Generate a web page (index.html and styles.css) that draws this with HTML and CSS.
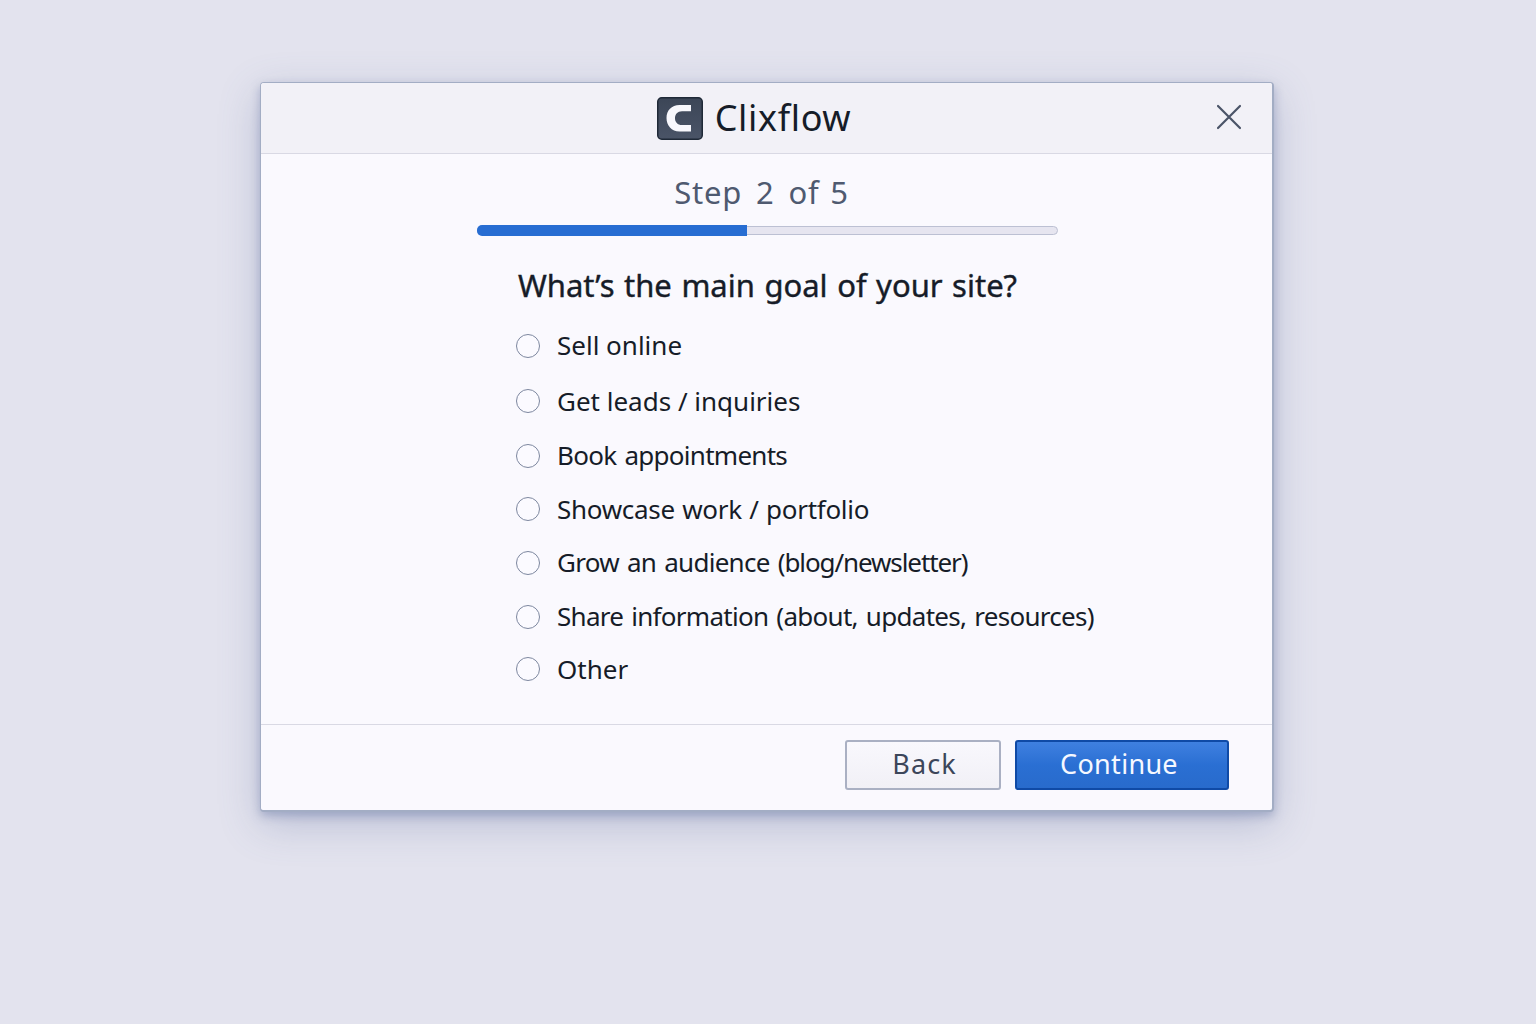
FILE: index.html
```
<!DOCTYPE html>
<html lang="en">
<head>
    <meta charset="UTF-8">
    <meta name="viewport" content="width=device-width, initial-scale=1.0">
    <title>Clixflow</title>
    <link rel="stylesheet" href="styles.css">
</head>
<body>
    <div class="modal">
        <header class="modal-header">
            <div class="brand">
                <svg class="logo" viewBox="0 0 46 43" width="46" height="43">
                    <defs>
                        <linearGradient id="logoBg" x1="0" y1="0" x2="0" y2="1">
                            <stop offset="0" stop-color="#3c4657"/>
                            <stop offset="1" stop-color="#4a5467"/>
                        </linearGradient>
                    </defs>
                    <rect x="0.75" y="0.75" width="44.5" height="41.5" rx="4" fill="url(#logoBg)" stroke="#1f2937" stroke-width="1.5"/>
                    <path d="M34 8H22.500C14.500 8 9.500 13.500 9.500 21S14.500 34.500 22.500 34.500H34V28H25C20.500 28 18 25 18 21.200S20.500 14.200 25 14.200H34Z" fill="#f7f7fc"/>
                </svg>
                <span class="brand-name">Clixflow</span>
            </div>
            <button class="close" aria-label="Close">
                <svg viewBox="0 0 26 26" width="26" height="26">
                    <path d="M2 2L24 24M24 2L2 24" fill="none" stroke="#4b5468" stroke-width="2.2" stroke-linecap="round"/>
                </svg>
            </button>
        </header>

        <main class="modal-body">
            <p class="step">Step <span class="step-num">2</span> of 5</p>
            <div class="progress"><div class="progress-fill"></div></div>

            <h1 class="question">What’s the main goal of your site?</h1>
            <div class="options">
                <label class="option"><input type="radio" name="goal"><span>Sell online</span></label>
                <label class="option"><input type="radio" name="goal"><span>Get leads / inquiries</span></label>
                <label class="option"><input type="radio" name="goal"><span class="tight">Book appointments</span></label>
                <label class="option"><input type="radio" name="goal"><span class="snug">Showcase work / portfolio</span></label>
                <label class="option"><input type="radio" name="goal"><span class="tight">Grow an audience <span class="tighter">(blog/newsletter)</span></span></label>
                <label class="option"><input type="radio" name="goal"><span class="tight">Share information (about, updates, resources)</span></label>
                <label class="option"><input type="radio" name="goal"><span>Other</span></label>
            </div>
        </main>

        <footer class="modal-footer">
            <button class="btn btn-back">Back</button>
            <button class="btn btn-continue">Continue</button>
        </footer>
    </div>
</body>
</html>
```
FILE: styles.css
```
* {
    box-sizing: border-box;
}
body {
    margin: 0;
    height: 1024px;
    padding: 82px 0 0 260px;
    background: #e3e3ee;
    font-family: "Noto Sans", "Open Sans", sans-serif;
    color: #161c28;
    overflow: hidden;
}
.modal {
    display: flex;
    flex-direction: column;
    width: 1014px;
    height: 730px;
    background: #faf9fe;
    border: 1px solid #a3adc4;
    border-right-width: 2px;
    border-bottom-width: 2px;
    border-radius: 4px;
    overflow: hidden;
    box-shadow: 0 4px 10px rgba(80, 98, 150, 0.34), 0 12px 40px rgba(90, 105, 155, 0.3);
}
.modal-header {
    display: grid;
    grid-template-columns: 1fr auto 1fr;
    align-items: center;
    height: 71px;
    padding: 0 30px 0 31px;
    background: #f2f1f7;
    border-bottom: 1px solid #d9d9e4;
}
.brand {
    grid-column: 2;
    display: flex;
    align-items: center;
    gap: 12px;
    margin-right: 26px;
}
.logo,
.close svg {
    display: block;
}
.brand-name {
    font-size: 36px;
    line-height: 44px;
    letter-spacing: 0.65px;
}
.close {
    justify-self: end;
    padding: 0 0 2px;
    border: none;
    background: none;
    cursor: pointer;
}
.modal-body {
    display: flex;
    flex-direction: column;
    flex: 1;
}
.step {
    margin: 16px 0 0;
    padding-right: 10px;
    height: 44px;
    line-height: 44px;
    text-align: center;
    font-size: 31px;
    letter-spacing: 0.8px;
    word-spacing: 2px;
    color: #4f5a70;
}
.step-num {
    margin: 0 3px;
}
.progress {
    align-self: center;
    display: flex;
    align-items: center;
    width: 581px;
    height: 9px;
    margin-top: 12px;
    margin-left: 1px;
    background: #e6e5f0;
    border: 1px solid #bcc0d3;
    border-radius: 5px;
}
.progress-fill {
    flex: none;
    width: 270px;
    height: 11px;
    margin-left: -1px;
    background: #276dd2;
    border-radius: 5px 0 0 5px;
}
.question {
    margin: 28px 0 0 257px;
    height: 44px;
    line-height: 44px;
    font-size: 31px;
    font-weight: 400;
    letter-spacing: -0.01px;
    word-spacing: 1.5px;
    -webkit-text-stroke: 0.4px #161c28;
    white-space: nowrap;
}
.options {
    display: grid;
    grid-template-rows: 56px 55px 54px 53px 54px 54px 51px;
    margin: 10px 0 0 255px;
}
.option {
    display: flex;
    align-items: center;
    gap: 17px;
    font-size: 26px;
    line-height: 36px;
    white-space: nowrap;
}
.option input {
    appearance: none;
    width: 24px;
    height: 24px;
    margin: 1px 0 0;
    border: 1.5px solid #7d879f;
    border-radius: 50%;
    background: #fbfaff;
}
.snug {
    letter-spacing: -0.3px;
    word-spacing: 1px;
}
.tight {
    letter-spacing: -0.72px;
    word-spacing: 2px;
}
.tighter {
    letter-spacing: -1.1px;
}
.modal-footer {
    display: flex;
    justify-content: flex-end;
    align-items: flex-start;
    gap: 14px;
    height: 86px;
    padding: 15px 43px 0 0;
    border-top: 1px solid #d9d9e4;
}
.btn {
    height: 50px;
    padding: 0 0 3px;
    font-family: inherit;
    font-size: 27px;
    border-radius: 3px;
    cursor: pointer;
}
.btn-back {
    width: 156px;
    padding-left: 3px;
    letter-spacing: 1.1px;
    color: #3c465a;
    background: linear-gradient(#f9f8fd, #f1f0f6);
    border: 2px solid #aab0c3;
}
.btn-continue {
    width: 214px;
    padding-right: 6px;
    letter-spacing: 0.3px;
    color: #f5f8ff;
    background: linear-gradient(#3f80e0, #2a6fd3 50%, #286bcc);
    border: 2px solid #0f4aa6;
}
```
